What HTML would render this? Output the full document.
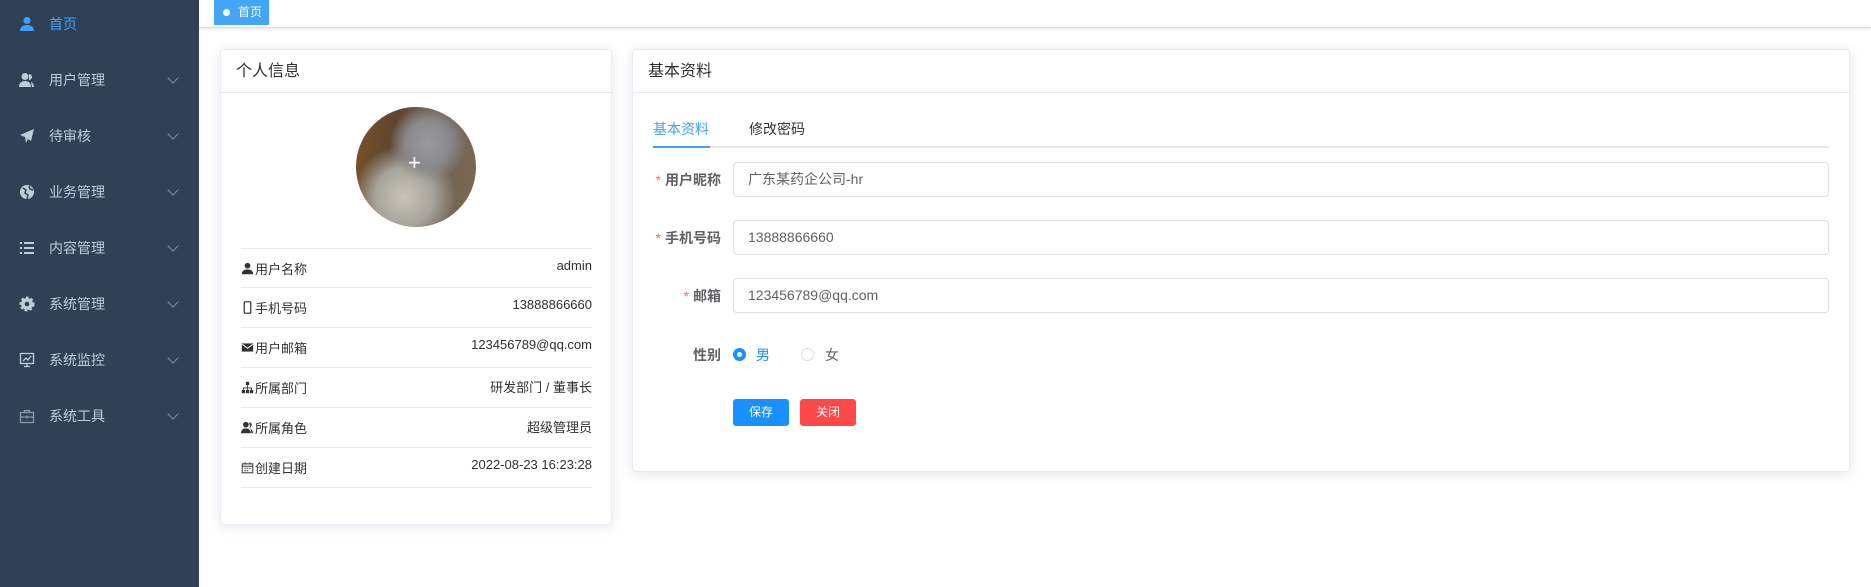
<!DOCTYPE html>
<html><head><meta charset="utf-8"><style>
*{margin:0;padding:0;box-sizing:border-box}
body{width:1871px;height:587px;overflow:hidden;background:#fff;font-family:"Liberation Sans","Noto Sans CJK SC",sans-serif;position:relative}
.side{position:absolute;left:0;top:0;width:199px;height:587px;background:#304156}
.mi{position:absolute;left:0;width:199px;height:20px;color:#bfcbd9;font-size:14px;line-height:20px}
.mi .ic{position:absolute;left:19px;top:2px;width:16px;height:16px}
.mi .tx{position:absolute;left:49px}
.mi .ch{position:absolute;left:169px;top:4px;width:8px;height:8px;border-right:1px solid #8b97a6;border-bottom:1px solid #8b97a6;transform:rotate(45deg)}
.hdr{position:absolute;left:199px;top:0;right:0;height:28px;background:#fff;box-shadow:0 1px 3px rgba(0,21,41,.12);border-bottom:1px solid #d8dce5}
.tag{position:absolute;left:214px;top:0;width:55px;height:25px;background:#42a5f5;color:#fff;font-size:12px;line-height:25px;padding-left:24px}
.tag:before{content:"";position:absolute;left:9px;top:9px;width:7px;height:7px;border-radius:50%;background:#fff}
.card{position:absolute;background:#fff;border:1px solid #e6ebf5;border-radius:4px;box-shadow:0 2px 12px rgba(0,0,0,.1)}
.ct{position:absolute;left:0;right:0;top:0;height:43px;border-bottom:1px solid #e6ebf5;font-size:16px;color:#303133;line-height:43px;padding-left:15px}
.row{position:absolute;left:20px;width:351px;height:40px;border-bottom:1px solid #e7eaec;font-size:13px;color:#303133}
.row .l{position:absolute;left:0;top:10px;display:flex;align-items:center}
.row .r{position:absolute;right:0;top:9px}
.row svg{width:13px;height:13px;margin-right:1px}
.lab{position:absolute;width:100px;text-align:right;font-size:14px;font-weight:bold;color:#606266;left:621px}
.lab i{color:#f56c6c;font-style:normal;font-weight:normal;margin-right:4px}
.inp{position:absolute;left:733px;width:1096px;height:35px;border:1px solid #dcdfe6;border-radius:4px;font-size:14px;color:#606266;line-height:33px;padding-left:14px}
.btn{position:absolute;top:399px;height:27px;width:56px;border-radius:3px;color:#fff;font-size:12px;line-height:27px;text-align:center}
</style></head><body>
<div class="side">
 <div class="mi" style="top:14px;color:#409eff"><svg class="ic" viewBox="0 0 16 16"><circle cx="8" cy="4.5" r="3.5" fill="#409eff"/><path d="M1 15c0-4 3-6 7-6s7 2 7 6z" fill="#409eff"/></svg><span class="tx">首页</span></div>
 <div class="mi" style="top:70px"><svg class="ic" viewBox="0 0 16 16" fill="#bfcbd9"><circle cx="6" cy="4.5" r="3.5"/><path d="M0 15c0-4 2.5-6 6-6s6 2 6 6z"/><path d="M10 2a3 3 0 010 6M12 10c2 1 3 3 3 5h-2" /></svg><span class="tx">用户管理</span><span class="ch"></span></div>
 <div class="mi" style="top:126px"><svg class="ic" viewBox="0 0 16 16" fill="#bfcbd9"><path d="M15 1L1 7l5 2 1 6 2-4 3 2z"/></svg><span class="tx">待审核</span><span class="ch"></span></div>
 <div class="mi" style="top:182px"><svg class="ic" viewBox="0 0 16 16"><circle cx="8" cy="8" r="7" fill="#bfcbd9"/><path d="M4 4l3 2-1 3 3 2-1 4M10 2l1 3 3 1" stroke="#304156" stroke-width="1.5" fill="none"/></svg><span class="tx">业务管理</span><span class="ch"></span></div>
 <div class="mi" style="top:238px"><svg class="ic" viewBox="0 0 16 16" fill="#bfcbd9"><rect x="1" y="2" width="2" height="2"/><rect x="5" y="2" width="10" height="2"/><rect x="1" y="7" width="2" height="2"/><rect x="5" y="7" width="10" height="2"/><rect x="1" y="12" width="2" height="2"/><rect x="5" y="12" width="10" height="2"/></svg><span class="tx">内容管理</span><span class="ch"></span></div>
 <div class="mi" style="top:294px"><svg class="ic" viewBox="0 0 16 16"><circle cx="8" cy="8" r="6" fill="#bfcbd9" stroke="#bfcbd9" stroke-width="3" stroke-dasharray="2.5 2"/><circle cx="8" cy="8" r="2.3" fill="#304156"/></svg><span class="tx">系统管理</span><span class="ch"></span></div>
 <div class="mi" style="top:350px"><svg class="ic" viewBox="0 0 16 16" fill="none" stroke="#bfcbd9" stroke-width="1.3"><rect x="1.5" y="1.5" width="13" height="10"/><path d="M4 9l3-3 2 2 3-4M8 11.5v3M5 14.5h6"/></svg><span class="tx">系统监控</span><span class="ch"></span></div>
 <div class="mi" style="top:406px"><svg class="ic" viewBox="0 0 16 16" fill="none" stroke="#8b97a6" stroke-width="1.3"><rect x="1.5" y="4.5" width="13" height="10"/><path d="M5.5 4.5v-2h5v2M1.5 9h13M8 7.5v3"/></svg><span class="tx">系统工具</span><span class="ch"></span></div>
</div>
<div class="hdr"></div>
<div class="tag">首页</div>

<div class="card" style="left:220px;top:49px;width:392px;height:476px">
 <div class="ct">个人信息</div>
 <div style="position:absolute;left:135px;top:57px;width:120px;height:120px;border-radius:50%;background:radial-gradient(circle at 60% 30%,#9a9a9e 0,#8a8a8c 20%,transparent 35%),radial-gradient(circle at 40% 75%,#c8c4b8 0,#a8a49c 25%,transparent 45%),linear-gradient(100deg,#7a5428 0,#5e4530 30%,#6c6259 60%,#7c6a4e 100%)">
  <div style="position:absolute;left:52px;top:45px;color:#fff;font-size:22px;line-height:22px">+</div></div>
 <div class="row" style="top:198px;border-top:1px solid #e7eaec"><span class="l"><svg viewBox="0 0 16 16" fill="#303133"><circle cx="8" cy="4.5" r="3.5"/><path d="M1 15c0-4 3-6 7-6s7 2 7 6z"/></svg>用户名称</span><span class="r">admin</span></div>
 <div class="row" style="top:238px"><span class="l"><svg viewBox="0 0 16 16" fill="none" stroke="#303133" stroke-width="1.5"><rect x="4" y="1" width="8" height="14" rx="1"/></svg>手机号码</span><span class="r">13888866660</span></div>
 <div class="row" style="top:278px"><span class="l"><svg viewBox="0 0 16 16"><rect x="1" y="3" width="14" height="10" fill="#303133"/><path d="M1.5 4l6.5 5 6.5-5" stroke="#fff" stroke-width="1.2" fill="none"/></svg>用户邮箱</span><span class="r">123456789@qq.com</span></div>
 <div class="row" style="top:318px"><span class="l"><svg viewBox="0 0 16 16" fill="#303133"><rect x="6" y="1" width="4" height="4"/><rect x="1" y="11" width="4" height="4"/><rect x="6" y="11" width="4" height="4"/><rect x="11" y="11" width="4" height="4"/><path d="M7.5 5h1v3h5v3h-1v-2h-4v2h-1v-2h-4v2h-1v-3h5z"/></svg>所属部门</span><span class="r">研发部门 / 董事长</span></div>
 <div class="row" style="top:358px"><span class="l"><svg viewBox="0 0 16 16" fill="#303133"><circle cx="6" cy="4.5" r="3.5"/><path d="M0 15c0-4 2.5-6 6-6s6 2 6 6z"/><path d="M10 1.5a3 3 0 010 6.5l2 2c2 1 3 3 3 5h-2"/></svg>所属角色</span><span class="r">超级管理员</span></div>
 <div class="row" style="top:398px"><span class="l"><svg viewBox="0 0 16 16" fill="none" stroke="#303133" stroke-width="1.2"><rect x="1.5" y="3.5" width="13" height="11"/><path d="M1.5 6.5h13M5 1.5v3M11 1.5v3M4 9h2M7 9h2M10 9h2M4 12h2M7 12h2"/></svg>创建日期</span><span class="r">2022-08-23 16:23:28</span></div>
</div>

<div class="card" style="left:632px;top:49px;width:1218px;height:423px">
 <div class="ct">基本资料</div>
</div>
<div style="position:absolute;left:653px;top:119px;font-size:14px;color:#409eff">基本资料</div>
<div style="position:absolute;left:749px;top:119px;font-size:14px;color:#303133">修改密码</div>
<div style="position:absolute;left:653px;top:146px;width:1176px;height:2px;background:#e4e7ed"></div>
<div style="position:absolute;left:653px;top:146px;width:57px;height:2px;background:#409eff"></div>

<div class="lab" style="top:170px"><i>*</i>用户昵称</div>
<div class="inp" style="top:162px">广东某药企公司-hr</div>
<div class="lab" style="top:228px"><i>*</i>手机号码</div>
<div class="inp" style="top:220px">13888866660</div>
<div class="lab" style="top:286px"><i>*</i>邮箱</div>
<div class="inp" style="top:278px">123456789@qq.com</div>
<div class="lab" style="top:345px">性别</div>
<div style="position:absolute;left:733px;top:348px;width:13px;height:13px;border-radius:50%;background:#1890ff"><div style="position:absolute;left:4px;top:4px;width:5px;height:5px;border-radius:50%;background:#fff"></div></div>
<div style="position:absolute;left:756px;top:345px;font-size:14px;color:#1890ff">男</div>
<div style="position:absolute;left:801px;top:348px;width:13px;height:13px;border-radius:50%;border:1px solid #dcdfe6"></div>
<div style="position:absolute;left:825px;top:345px;font-size:14px;color:#606266">女</div>
<div class="btn" style="left:733px;background:#1890ff">保存</div>
<div class="btn" style="left:800px;background:#ff4949">关闭</div>
</body></html>
